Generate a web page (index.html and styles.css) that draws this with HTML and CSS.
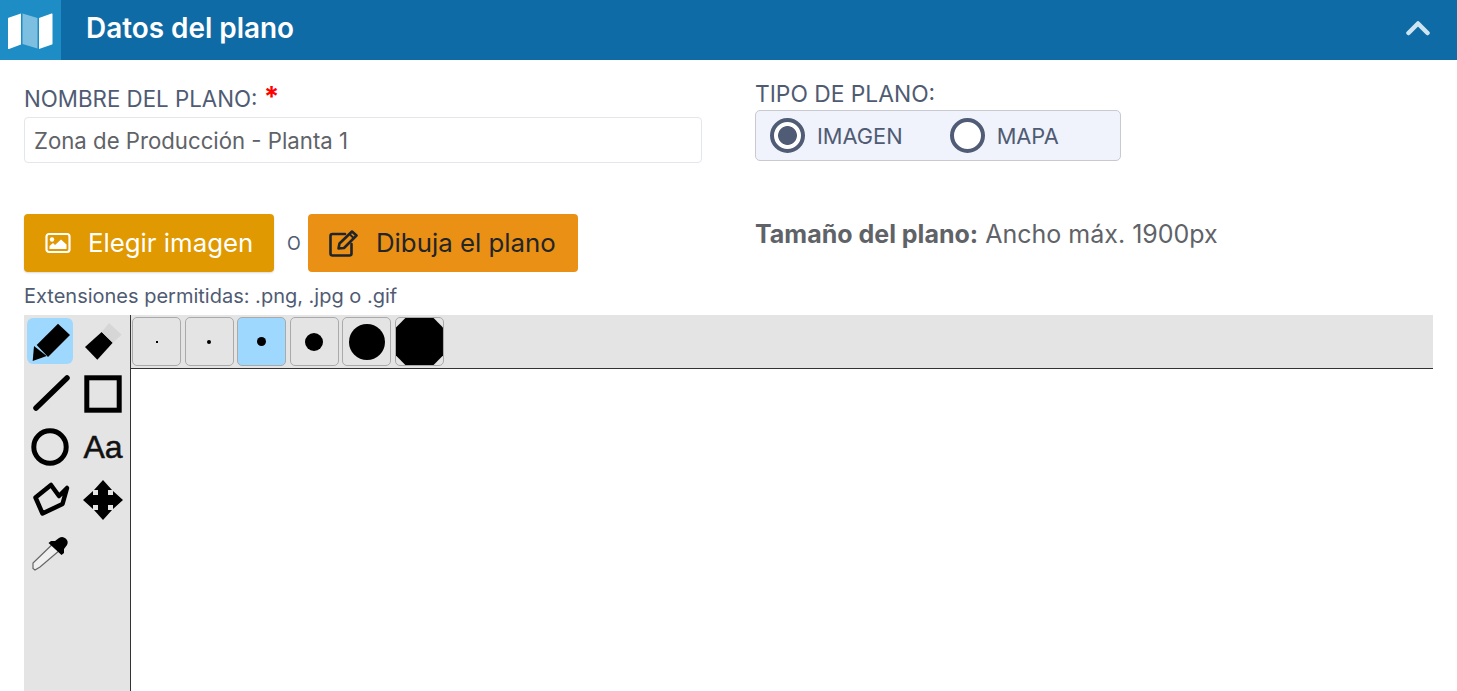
FILE: index.html
```html
<!DOCTYPE html>
<html lang="es">
<head>
<meta charset="utf-8">
<title>Datos del plano</title>
<link rel="stylesheet" href="styles.css">
</head>
<body>
<header class="bar">
  <div class="bar-icon">
    <svg width="46" height="38" viewBox="0 0 46 38"><path d="M1 6.500Q1 6 1.500 5.800L14 1.500V32.500L2 37Q1 37.300 1 36.500Z" fill="#fff"/><path d="M15.500 1.500 30.500 6V36.500L15.500 32Z" fill="#7dbfe0"/><path d="M32 6 44.500 1.500Q45.500 1.200 45.500 2V31.800Q45.500 32.300 45 32.500L32 37Z" fill="#fff"/></svg>
  </div>
  <h1 class="bar-title">Datos del plano</h1>
  <svg class="chevron" width="26" height="16" viewBox="0 0 26 16"><path d="M3.500 13 13 3.500 22.500 13" fill="none" stroke="#cfe4f1" stroke-width="4.500" stroke-linecap="round" stroke-linejoin="round"/></svg>
</header>

<main class="content">
  <section class="fields">
    <div class="col-left">
      <label class="label name-label">NOMBRE DEL PLANO: <span class="req">*</span></label>
      <div class="input">Zona de Producción - Planta 1</div>
    </div>
    <div class="col-right">
      <div class="label type-label">TIPO DE PLANO:</div>
      <div class="radios">
        <span class="radio on"></span><span class="radio-text first">IMAGEN</span>
        <span class="radio"></span><span class="radio-text">MAPA</span>
      </div>
    </div>
  </section>

  <section class="actions">
    <div class="col-left">
      <div class="btn-row">
        <button class="btn btn-image">
          <svg width="26" height="22" viewBox="0 0 26 22"><rect x="1.500" y="2" width="23" height="18" rx="2.500" fill="none" stroke="#fff" stroke-width="2.200"/><circle cx="7" cy="7.500" r="2.200" fill="#fff"/><path d="M4.500 17V14L8 11l2 2 6-5.500 5.500 5V17Z" fill="#fff"/></svg>
          Elegir imagen
        </button>
        <span class="or">O</span>
        <button class="btn btn-draw">
          <svg width="30" height="28" viewBox="0 0 30 28"><path d="M17 5H4.500A2 2 0 0 0 2.500 7V24.500A2 2 0 0 0 4.500 26.500H21.500A2 2 0 0 0 23.500 24.500V15" fill="none" stroke="#212529" stroke-width="2.600" stroke-linecap="round"/><path d="M10.500 19.500 11.500 14.500 24 2.500 28.500 6.500 16 19Z" fill="none" stroke="#212529" stroke-width="2.600" stroke-linejoin="round"/><path d="M21.500 5 26 9.500" stroke="#212529" stroke-width="2"/></svg>
          Dibuja el plano
        </button>
      </div>
      <p class="hint">Extensiones permitidas: .png, .jpg o .gif</p>
    </div>
    <div class="col-right">
      <p class="size"><strong>Tamaño del plano:</strong> Ancho máx. 1900px</p>
    </div>
  </section>

  <section class="editor">
    <aside class="tools">
      <div class="tool active">
        <svg width="40" height="40" viewBox="0 0 40 40"><path d="M6.700 24 28 2.700 40 14 18 36Z" fill="#000"/><path d="M4 25 16.700 35 2.700 40Z" fill="#000"/></svg>
      </div>
      <div class="tool">
        <svg width="40" height="40" viewBox="0 0 40 40"><path d="M2 26 18.700 11 29.700 21.700 14.300 38.700Z" fill="#000"/><path d="M18.700 11 26 2 38.700 13.700 29.700 21.700Z" fill="#d6d6d6"/></svg>
      </div>
      <div class="tool">
        <svg width="40" height="40" viewBox="0 0 40 40"><path d="M6 34 37 4" stroke="#000" stroke-width="5.500" stroke-linecap="round"/></svg>
      </div>
      <div class="tool">
        <svg width="40" height="40" viewBox="0 0 40 40"><rect x="3.800" y="3.800" width="32.400" height="32.400" fill="none" stroke="#000" stroke-width="5"/></svg>
      </div>
      <div class="tool">
        <svg width="40" height="40" viewBox="0 0 40 40"><circle cx="20" cy="20" r="16.200" fill="none" stroke="#000" stroke-width="5"/></svg>
      </div>
      <div class="tool tool-text">Aa</div>
      <div class="tool">
        <svg width="40" height="40" viewBox="0 0 40 40"><path d="M5.500 17.500 21 5 29 16 37 8 32.500 24 12.500 33.500Z" fill="none" stroke="#000" stroke-width="4.500" stroke-linejoin="round"/></svg>
      </div>
      <div class="tool">
        <svg width="40" height="40" viewBox="0 0 40 40"><path d="M20 0 29 10H25V15H30V11L40 20 30 29V25H25V30H29L20 40 11 30H15V25H10V29L0 20 10 11V15H15V10H11Z" fill="#000"/></svg>
      </div>
      <div class="tool">
        <svg width="40" height="40" viewBox="0 0 40 40"><path d="M21.700 12 3 30 3 35.500 5 37 10 34 30 17" fill="#f0f0f0" stroke="#666" stroke-width="1.200"/><path d="M21 8 25 8 29 5A5.500 5.500 0 0 1 37 12L34 16 34 20 31.500 22 18.500 10Z" fill="#000"/></svg>
      </div>
    </aside>
    <div class="stage">
      <div class="sizes">
        <div class="size-btn"><i class="dot d1"></i></div>
        <div class="size-btn"><i class="dot d2"></i></div>
        <div class="size-btn active"><i class="dot d3"></i></div>
        <div class="size-btn"><i class="dot d4"></i></div>
        <div class="size-btn"><i class="dot d5"></i></div>
        <div class="size-btn"><i class="dot d6"></i></div>
      </div>
      <div class="canvas"></div>
    </div>
  </section>
</main>
</body>
</html>
```

FILE: styles.css
```css
* { box-sizing: border-box; }
html, body { margin: 0; height: 100%; overflow: hidden; }
body { background: #fff; font-family: Inter, "Noto Sans", sans-serif; color: #4f5b73; }

.bar { display: flex; align-items: center; height: 60px; background: #0f6ba5; }
.bar-icon { width: 61px; height: 60px; display: flex; align-items: center; justify-content: center; background: #1e8dc5; flex: none; padding: 1px 2px 0 0; }
.bar-title { margin: 0 0 4px 25px; font-size: 27.900px; font-weight: 600; color: #fff; line-height: 56px; flex: 1; }
.chevron { margin: 0 26px 4px 0; flex: none; }

.content { padding: 0 24px; }
.fields { display: flex; height: 154px; }
.col-left { width: 731px; flex: none; }
.col-right { flex: 1; }
.label { font-size: 22.300px; line-height: 24px; }
.name-label { display: block; margin-top: 27px; margin-bottom: 6px; }
.type-label { font-size: 22.800px; margin-top: 22px; margin-bottom: 4px; }
.req { color: #f00; font-size: 28px; font-weight: 700; line-height: 20px; }
.input { width: 678px; height: 46px; border: 1px solid #e4e6ec; border-radius: 4px; padding: 0 9px; font-size: 22.200px; line-height: 46px; color: #5f6368; }

.radios { display: flex; align-items: center; width: 366px; height: 51px; background: #f0f3fb; border: 1px solid #c8cad0; border-radius: 5px; padding: 0 14px; font-size: 21.800px; }
.radio { width: 35px; height: 35px; border-radius: 50%; border: 4px solid #505c75; flex: none; background: #fff; }
.radio.on { background: radial-gradient(circle, #505c75 0 9px, #fff 9.800px); }
.radio-text { margin-left: 12px; }
.radio-text.first { margin-right: 47px; }

.actions { display: flex; height: 101px; }
.btn-row { display: flex; align-items: center; }
.btn { display: flex; align-items: center; height: 58px; border: 0; border-radius: 4px; font: 400 25.800px Inter, sans-serif; padding-bottom: 2px; }
.btn-image { width: 250px; padding-left: 21px; gap: 17px; background: #e09900; color: #fff; box-shadow: 0 1px 2px rgba(0,0,0,.15); }
.btn-draw { width: 270px; padding-left: 20px; gap: 18px; background: #ea9015; color: #212529; }
.or { width: 34px; padding-left: 6px; text-align: center; font-size: 18px; }
.hint { margin: 13px 0 0; font-size: 20px; line-height: 22px; }
.size { margin: 6px 0 0; font-size: 25px; line-height: 28px; color: #5f6368; }
.size strong { font-weight: 700; }

.editor { display: flex; height: 376px; background: #e4e4e4; }
.tools { width: 107px; flex: none; border-right: 1px solid #333; padding: 3px 3px; display: grid; grid-template-columns: 46px 46px; grid-auto-rows: 46px; column-gap: 7px; row-gap: 7px; align-content: start; }
.tool { width: 46px; height: 46px; display: flex; align-items: center; justify-content: center; border-radius: 6px; }
.tool.active { background: #9fd8ff; }
.tool-text { font: 32px "Liberation Sans", Arial, sans-serif; color: #111; -webkit-text-stroke: .5px #111; }
.stage { flex: 1; display: flex; flex-direction: column; }
.sizes { height: 54px; border-bottom: 1px solid #333; padding: 2px 0 0 1px; display: flex; gap: 3.600px; flex: none; }
.size-btn { width: 49px; height: 49px; border: 1px solid #aaa; border-radius: 5px; display: flex; align-items: center; justify-content: center; }
.size-btn.active { background: #9fd8ff; }
.dot { display: block; background: #000; border-radius: 50%; }
.d1 { width: 2px; height: 2px; border-radius: 0; }
.d2 { width: 4px; height: 4px; }
.d3 { width: 9px; height: 9px; }
.d4 { width: 18px; height: 18px; }
.d5 { width: 36px; height: 36px; }
.d6 { width: 47px; height: 47px; clip-path: polygon(20% 0, 80% 0, 100% 20%, 100% 80%, 80% 100%, 20% 100%, 0 80%, 0 20%); border-radius: 0; }
.canvas { flex: 1; background: #fff; }
```
